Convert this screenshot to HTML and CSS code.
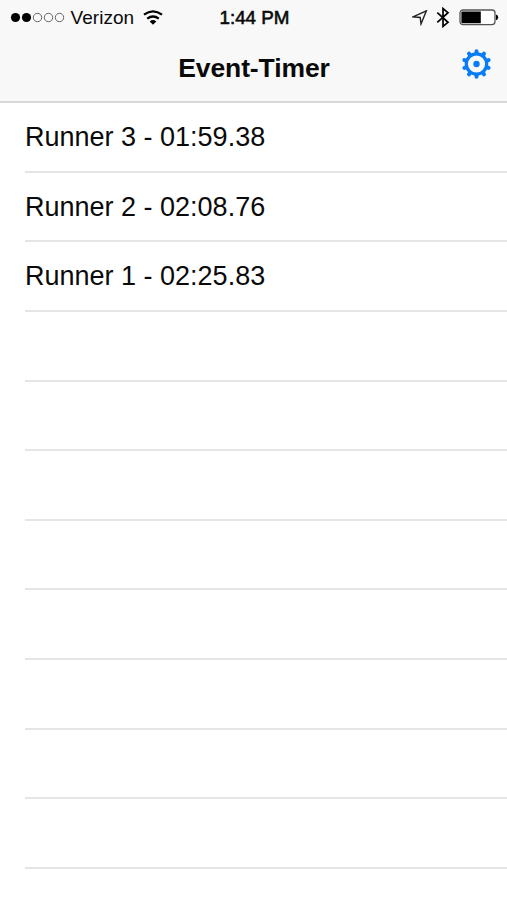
FILE: index.html
```html
<!DOCTYPE html>
<html lang="en">
<head>
<meta charset="utf-8">
<title>Event-Timer</title>
<link rel="stylesheet" href="styles.css">
</head>
<body>
<header class="top">
  <div class="status">
    <div class="carrier">
      <svg class="signal" width="56" height="12" viewBox="0 0 56 12"><g fill="#000"><circle cx="5.5" cy="5.5" r="4.6"/><circle cx="16.5" cy="5.5" r="4.6"/></g><g fill="none" stroke="#666" stroke-width="1"><circle cx="27.5" cy="5.5" r="4.2"/><circle cx="38.5" cy="5.5" r="4.2"/><circle cx="49.5" cy="5.5" r="4.2"/></g></svg>
      <span class="name">Verizon</span>
      <svg class="wifi" width="20" height="16" viewBox="0 0 20 16"><g fill="none" stroke="#000" stroke-width="2.2"><path d="M1 4.7Q10-2.1 19 4.7"/><path d="M4.2 8.7Q10 4.3 15.8 8.7"/></g><path d="M6.7 11.4Q10 8.8 13.3 11.4L10 14.8Z"/></svg>
    </div>
    <span class="time">1:44 PM</span>
    <div class="indicators">
      <svg class="location" width="16" height="16" viewBox="0 0 16 16"><path d="M1 6.8L14.4 0.8L9 14L8.2 7.5Z" fill="none" stroke="#222" stroke-width="1.4"/></svg>
      <svg class="bluetooth" width="14" height="22" viewBox="0 0 14 22"><path d="M1.3 5.7L12 15.3L7 19.5V1.5L12 5.7L1.3 15.3" fill="none" stroke="#000" stroke-width="1.7"/></svg>
      <svg class="battery" width="40" height="17" viewBox="0 0 40 17"><rect x="1" y="1" width="35" height="14.6" rx="3" fill="#fff" stroke="#555" stroke-width="1.3"/><path d="M3.5 2.4H21.8V14.2H3.5Q2.4 14.2 2.4 13V3.6Q2.4 2.4 3.5 2.4Z"/><path d="M37 5.4Q39.2 6 39.2 8.3T37 11.2Z"/></svg>
    </div>
  </div>
  <div class="nav">
    <h1>Event-Timer</h1>
    <svg class="gear" width="30" height="30" viewBox="-14.5 -15 30 30"><circle r="10.2" fill="none" stroke="#087cf7" stroke-width="3.2"/><circle r="3.2" fill="#087cf7"/><g stroke="#087cf7" stroke-width="4" stroke-linecap="round"><path d="M0-11V-12.7M0 11V12.7"/><path transform="rotate(36)" d="M0-11V-12.7M0 11V12.7"/><path transform="rotate(72)" d="M0-11V-12.7M0 11V12.7"/><path transform="rotate(108)" d="M0-11V-12.7M0 11V12.7"/><path transform="rotate(144)" d="M0-11V-12.7M0 11V12.7"/></g></svg>
  </div>
</header>
<ul class="list">
  <li>Runner 3 - 01:59.38</li>
  <li>Runner 2 - 02:08.76</li>
  <li>Runner 1 - 02:25.83</li>
  <li></li><li></li><li></li><li></li><li></li><li></li><li></li><li></li>
</ul>
</body>
</html>
```
FILE: styles.css
```css
* { box-sizing: border-box; }
body {
  margin: 0;
  height: 900px;
  overflow: hidden;
  background: #fff;
  color: #0a0a0a;
  font-family: "Liberation Sans", Arial, sans-serif;
}
svg { display: block; flex: none; }
.top {
  height: 103px;
  background: #f8f8f8;
  border-bottom: 2px solid #d8d8d8;
}
.status {
  display: grid;
  grid-template-columns: 1fr auto 1fr;
  height: 34px;
  align-items: center;
  padding: 0 8px 0 10px;
  font-size: 19px;
  line-height: 35px;
}
.carrier, .indicators { display: flex; align-items: center; }
.name { margin-left: 4.5px; letter-spacing: 0.05px; }
.wifi { margin-left: 9px; }
.time {
  font-size: 18.8px;
  -webkit-text-stroke: 0.6px #0a0a0a;
}
.indicators { justify-content: flex-end; }
.bluetooth { margin: 0 9px 0 8px; }
.nav {
  display: grid;
  grid-template-columns: 1fr auto 1fr;
  height: 67px;
  align-items: center;
  padding: 0 15px 0 16px;
}
h1 {
  grid-column: 2;
  margin: 0;
  font-size: 26.5px;
  line-height: 30px;
  letter-spacing: -0.1px;
}
.gear { justify-self: end; margin-top: -8px; }
.list {
  margin: 0;
  padding: 0 0 0 25px;
  list-style: none;
}
.list li {
  height: 69.65px;
  border-bottom: 2px solid #e5e5e5;
  font-size: 27px;
  line-height: 69px;
}
```
